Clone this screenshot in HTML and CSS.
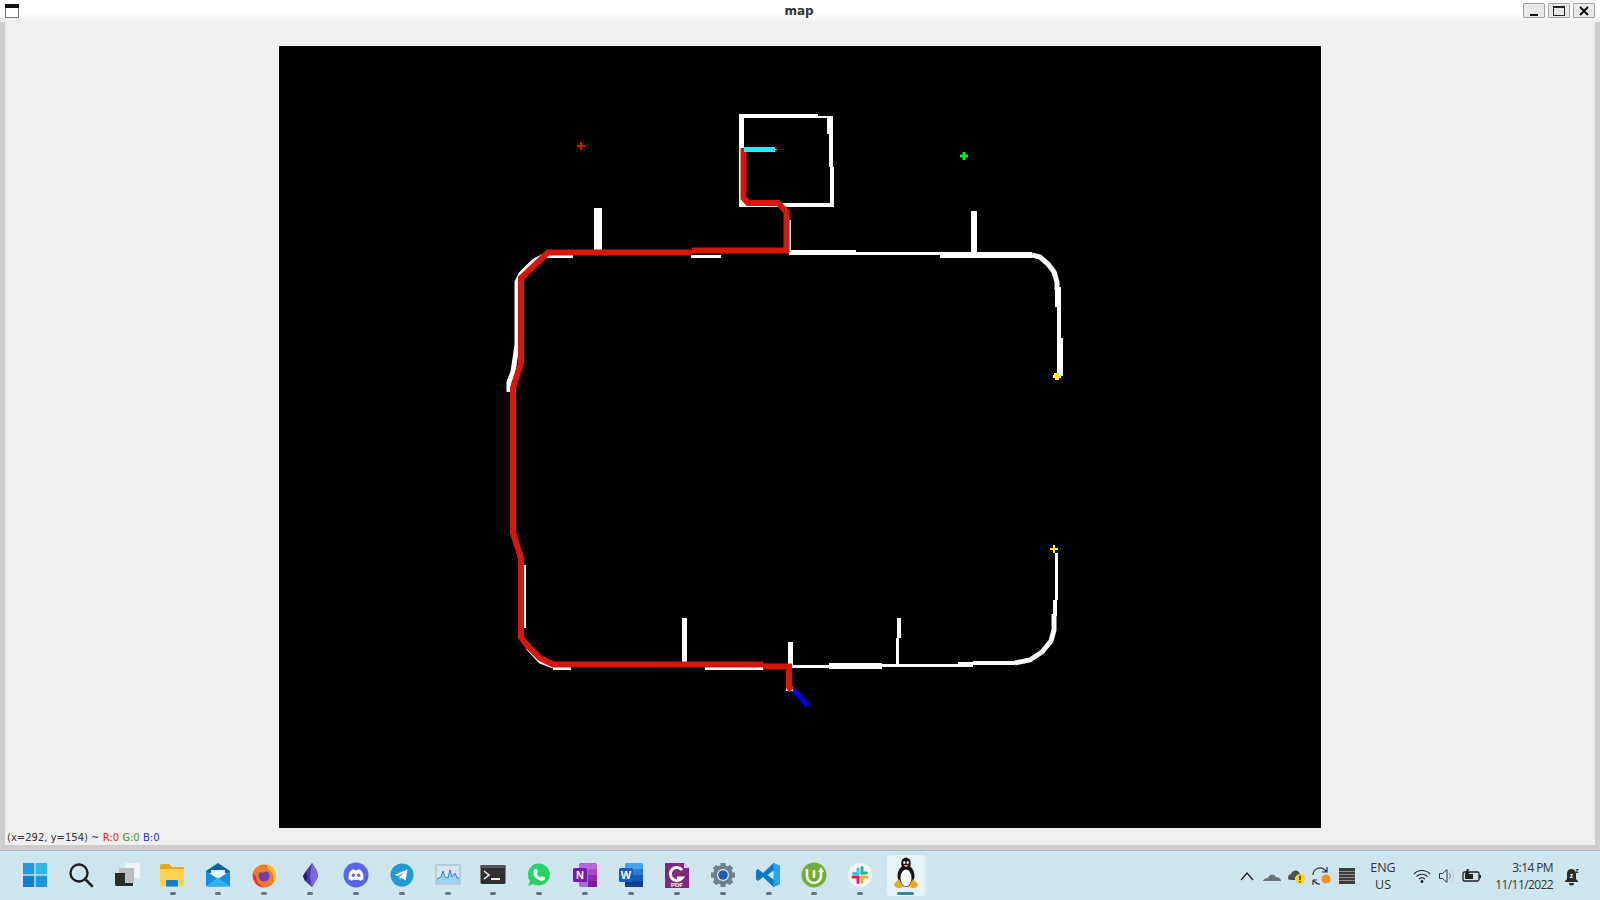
FILE: index.html
```html
<!DOCTYPE html>
<html lang="en">
  <head>
    <meta charset="UTF-8" />
    <meta name="viewport" content="width=device-width, initial-scale=1.0" />
    <title>map</title>
    <link rel="stylesheet" href="styles.css">
  </head>
  <body>
    <header class="titlebar">
      <svg class="win-icon" width="14" height="14" viewBox="0 0 14 14">
        <rect x="0.5" y="0.5" width="13" height="13" fill="#fff" stroke="#777"/>
        <rect x="0" y="0" width="14" height="4" fill="#111"/>
      </svg>
      <div class="title">map</div>
      <div class="win-buttons">
        <div class="win-btn"><svg width="12" height="12" viewBox="0 0 12 12"><rect x="2" y="9" width="8" height="2" fill="#111"/></svg></div>
        <div class="win-btn"><svg width="14" height="12" viewBox="0 0 14 12"><rect x="1.5" y="1.5" width="11" height="9" fill="none" stroke="#222"/><rect x="1" y="1" width="12" height="2" fill="#222"/></svg></div>
        <div class="win-btn"><svg width="12" height="12" viewBox="0 0 12 12"><path d="M2 2L10 10M10 2L2 10" stroke="#111" stroke-width="2"/></svg></div>
      </div>
    </header>

    <main class="window">
      <div class="canvas-wrap">
        <svg class="map" width="1042" height="782" viewBox="279 46 1042 782">
          <!-- room at the top -->
          <path class="wall" d="M739 114H818V118H739z M818 116H833V118H818z M739 118H744V207H739z M827 118H833V134H827z M829 134H833V167H829z M830 167H834V207H830z M739 203H834V207H739z"/>
          <!-- side stubs -->
          <path class="wall" d="M594 208H602V252H594z M971 211H977V254H971z M682 618H687V664H682z M788 642H793V668H788z M897 618H901V638H897z M896 638H899V665H896z M789 220H791V252H789z"/>
          <!-- top corridor -->
          <path class="wall" d="M545 255H573V258H545z M691 255H721V258H691z M789 250H856V255H789z M856 252H940V255H856z M940 252H1032V258H940z"/>
          <!-- right side -->
          <path class="wall" d="M1055 287H1061V307H1055z M1057 307H1061V338H1057z M1057 338H1063V376H1057z"/>
          <path class="wall" d="M1055 553H1058V600H1055z M1053 600H1057V616H1053z"/>
          <!-- bottom corridor -->
          <path class="wall" d="M553 667H571V670H553z M705 667H763V670H705z M792 665H829V668H792z M829 663H882V669H829z M882 664H958V667H882z M958 662H973V667H958z M973 661H1015V665H973z M524 565H526V628H524z M786 686H793V691H786z"/>
          <path class="wall-line" d="M1032 255 L1040 257 L1048 264 L1054 272 L1057 282 V290"/>
          <path class="wall-line" d="M1015 663 L1030 660 L1042 652 L1051 641 L1054 630 V614"/>
          <path class="wall-line" d="M548 254 L534 261 L521 274 L517 282 V345 L513 372 L509 382 V392"/>
          <path class="wall-thin" d="M527 648 L540 662 L553 667"/>

          <!-- planned path -->
          <path class="route" d="M743.5 148V198L748 203H778L786.500 212V250.500H692"/>
          <path class="route" d="M692 252.500H548L521 278V363L513 388V533L521 558V637L527 645L540 658L553 664.500H763"/>
          <path class="route" d="M763 666.500H789V687L792 690"/>

          <!-- heading arrows -->
          <path class="heading-cyan" d="M744 147H775V149H777V150H775V152H744z"/>
          <path class="heading-blue" d="M794 690L808 706"/>

          <!-- goal markers -->
          <path class="mark-red" d="M580 142H582V145H585V147H582V150H580V147H577V145H580z"/>
          <path class="mark-green" d="M962.500 152H965.500V154.500H968V157.500H965.500V160H962.500V157.500H960V154.500H962.500z"/>
          <path class="mark-yellow" d="M1053 545H1055V548H1058V550H1055V553H1053V550H1050V548H1053z"/>
          <path class="mark-yellow" d="M1054 373H1059V375H1061V378H1059V380H1055V378H1053V375H1054z"/>
        </svg>
      </div>
      <div class="status">(x=292, y=154) ~ <span class="st-r">R:0</span> <span class="st-g">G:0</span> <span class="st-b">B:0</span></div>
    </main>
    <div class="window-bottom"></div>

    <footer class="taskbar">
      <div class="apps">
        <div class="app plain"><svg width="26" height="26" viewBox="0 0 26 26"><path fill="#1e9be0" d="M1 1H12.300V12.300H1z"/><path fill="#35b4ee" d="M13.700 1H25V12.300H13.700z"/><path fill="#0f7fcb" d="M1 13.700H12.300V25H1z"/><path fill="#1e95dc" d="M13.700 13.700H25V25H13.700z"/></svg></div>
        <div class="app plain"><svg width="26" height="26" viewBox="0 0 26 26"><circle cx="11" cy="11" r="8.500" fill="none" stroke="#222" stroke-width="2.400"/><path d="M17 17L24 24" stroke="#222" stroke-width="2.600" stroke-linecap="round"/></svg></div>
        <div class="app plain"><svg width="26" height="26" viewBox="0 0 26 26"><rect x="11" y="1" width="15" height="15" rx="1.500" fill="#eef3f5"/><rect x="5" y="6" width="15" height="15" rx="1" fill="#b9bdbf"/><path d="M1 11H5V21H19V24H2.500A1.500 1.500 0 0 1 1 22.500z" fill="#2b2b2b"/><rect x="5" y="11" width="6" height="10" fill="#2b2b2b"/></svg></div>
        <div class="app"><svg width="26" height="26" viewBox="0 0 26 26"><path fill="#e5a71f" d="M1 3.500A1.500 1.500 0 0 1 2.500 2H10L13 5H24A1 1 0 0 1 25 6V9H1z"/><path fill="#fbd24d" d="M1 7H25V23A1.500 1.500 0 0 1 23.500 24.500H2.500A1.500 1.500 0 0 1 1 23z"/><rect x="7" y="18" width="12" height="6.500" fill="#1580d0"/></svg></div>
        <div class="app"><svg width="26" height="26" viewBox="0 0 26 26"><path fill="#0c62a8" d="M13 1L25 9V11H1V9z"/><path fill="#e6f3fb" d="M6 8H20V15H6z"/><path fill="#1690dc" d="M1 9L13 17L25 9V23A1.500 1.500 0 0 1 23.500 24.500H2.500A1.500 1.500 0 0 1 1 23z"/><path fill="#35b2ee" d="M1 24L13 16L25 24V24A1 1 0 0 1 24 24.500H2A1 1 0 0 1 1 24z"/></svg></div>
        <div class="app"><svg width="26" height="26" viewBox="0 0 26 26"><circle cx="13" cy="14" r="11.500" fill="#f57a2c"/><path fill="#fcc02e" d="M15 1.500C21 3 25 8 25 14C25 17 24 19 22.500 21C24 15 21 9 17 7C17 5 16 3 15 1.500z"/><path fill="#e8344a" d="M2 11C1 17 5 25 13 25.500C8 23 5 19 5 14z"/><circle cx="13" cy="14" r="5.500" fill="#6b3fb5"/><path fill="#f57a2c" d="M8 9C11 7 16 7 18 10C15 9 13 10 11 11z"/></svg></div>
        <div class="app"><svg width="26" height="26" viewBox="0 0 26 26"><path fill="#4a3aa8" d="M15 1L20 9L21 15L15 25L8 19L6 14L9 9z"/><path fill="#7c66dc" d="M15 1L20 9L21 15L15 25L13 15z"/><path fill="#2e2170" d="M8 19L6 14L9 9L11 16z"/></svg></div>
        <div class="app"><svg width="26" height="26" viewBox="0 0 26 26"><circle cx="13" cy="13" r="12.500" fill="#5865e8"/><path fill="#fff" d="M7.500 8.500C9 7.700 10.500 7.300 11 7.300L11.400 8.200H14.600L15 7.300C15.500 7.300 17 7.700 18.500 8.500C20 11 20.800 14 20.500 17C19.300 18 18 18.500 16.900 18.800L16 17.400C14 18 12 18 10 17.400L9.100 18.800C8 18.500 6.700 18 5.500 17C5.200 14 6 11 7.500 8.500z"/><circle cx="10.300" cy="13.300" r="1.700" fill="#5865e8"/><circle cx="15.700" cy="13.300" r="1.700" fill="#5865e8"/></svg></div>
        <div class="app"><svg width="26" height="26" viewBox="0 0 26 26"><circle cx="13" cy="13" r="11.500" fill="#2199d3"/><path fill="#fff" d="M5.500 12.800L18.500 7.500L16.500 18.500L12.700 15.800L10.800 17.600L10.400 14.700L16 10L9 14z"/></svg></div>
        <div class="app"><svg width="26" height="26" viewBox="0 0 26 26"><rect x="1" y="3" width="24" height="19" fill="#d7e6f0" stroke="#9db7c9"/><path d="M2 17L6 15L8 9L10 15L13 16L15 8L17 15L20 11L22 16L24 16V21H2z" fill="#9bd0ef"/><path d="M2 17L6 15L8 9L10 15L13 16L15 8L17 15L20 11L22 16L24 16" fill="none" stroke="#2f86c9" stroke-width="1"/></svg></div>
        <div class="app"><svg width="26" height="26" viewBox="0 0 26 26"><rect x="0.500" y="3" width="25" height="19" rx="1.500" fill="#2f2f2f"/><rect x="0.500" y="3" width="25" height="3" fill="#555"/><path d="M4 9L9 13L4 17" fill="none" stroke="#eee" stroke-width="1.600"/><rect x="11" y="16" width="9" height="2" fill="#eee"/></svg></div>
        <div class="app"><svg width="26" height="26" viewBox="0 0 26 26"><path fill="#25d366" d="M13 1.500A11 11 0 1 1 7.300 22L2 24L4 18.900A11 11 0 0 1 13 1.500z"/><path fill="#fff" d="M9 7L11 7.300L12 10L10.800 11.700C11.500 13.400 12.800 14.700 14.500 15.400L16 14L18.700 15.200L18.900 17.300C17.500 19 15 19 12.500 17.800C10 16.500 8 14.200 7.300 11.500C6.900 9.500 7.800 8 9 7z"/></svg></div>
        <div class="app"><svg width="26" height="26" viewBox="0 0 26 26"><rect x="7" y="1" width="18" height="24" rx="1.500" fill="#b469d8"/><rect x="16" y="7" width="9" height="6" fill="#a64cc9"/><rect x="16" y="13" width="9" height="6" fill="#8f2fb0"/><rect x="16" y="19" width="9" height="6" fill="#7c2199"/><rect x="1" y="6" width="14" height="14" rx="1.500" fill="#7719aa"/><text x="8" y="17" class="icon-text" font-size="11">N</text></svg></div>
        <div class="app"><svg width="26" height="26" viewBox="0 0 26 26"><rect x="7" y="1" width="18" height="24" rx="1.500" fill="#41a5ee"/><rect x="7" y="7" width="18" height="6" fill="#2b7cd3"/><rect x="7" y="13" width="18" height="6" fill="#185abd"/><rect x="7" y="19" width="18" height="6" fill="#103f91"/><rect x="1" y="6" width="14" height="14" rx="1.500" fill="#1a5dbd"/><text x="8" y="17" class="icon-text" font-size="11">W</text></svg></div>
        <div class="app"><svg width="26" height="26" viewBox="0 0 26 26"><path fill="#7c2a7f" d="M1 1H20L25 6V26H1z"/><path fill="#e6cfe8" d="M20 1L25 6H20z"/><path d="M18 8A6.500 6.500 0 1 0 18 16H13" fill="none" stroke="#fff" stroke-width="3"/><text x="13" y="24.500" class="icon-text" font-size="6">PDF</text></svg></div>
        <div class="app"><svg width="26" height="26" viewBox="0 0 26 26"><path d="M13 1V25M1 13H25M4.500 4.500L21.500 21.500M21.500 4.500L4.500 21.500" stroke="#6f7f8c" stroke-width="5"/><circle cx="13" cy="13" r="10" fill="#6f7f8c"/><circle cx="13" cy="13" r="6" fill="#e9f1f5"/><circle cx="13" cy="13" r="4.800" fill="#1f5fb0"/></svg></div>
        <div class="app"><svg width="26" height="26" viewBox="0 0 26 26"><path fill="#0b7ac4" d="M18.500 1L25 4V22L18.500 25L8 15L3 19L1 17.500V8.500L3 7L8 11z"/><path fill="#2ba4ee" d="M18.500 1L25 4V22L18.500 25V17L12 13L18.500 9z"/><path fill="#cfe5ec" d="M18.500 8.500V17.500L12.500 13z"/></svg></div>
        <div class="app"><svg width="26" height="26" viewBox="0 0 26 26"><circle cx="13" cy="13" r="12.500" fill="#76ad3a"/><path d="M6 7V14A7 7 0 0 0 20 14V9" fill="none" stroke="#f2f6ea" stroke-width="2.600"/><path d="M13 8V16" stroke="#f2f6ea" stroke-width="2.600"/><path d="M20 5L23 10H17z" fill="#f2f6ea"/></svg></div>
        <div class="app"><svg width="26" height="26" viewBox="0 0 26 26"><circle cx="13" cy="13" r="12" fill="#f4f4f4"/><g stroke-width="3" stroke-linecap="round"><path d="M11 7V11.500H6.500" stroke="#36c5f0" fill="none"/><path d="M15 5.500V11" stroke="#2eb67d"/><path d="M15 11H19.500" stroke="#2eb67d"/><path d="M15 15H20" stroke="#ecb22e"/><path d="M15 15V20" stroke="#ecb22e"/><path d="M11 15V20.500" stroke="#e01e5a"/><path d="M6 15H11" stroke="#e01e5a"/></g></svg></div>
        <div class="app active"><svg width="26" height="32" viewBox="0 0 26 32"><ellipse cx="13" cy="19" rx="8.500" ry="11" fill="#151515"/><ellipse cx="13" cy="6.500" rx="4.800" ry="6" fill="#151515"/><ellipse cx="13" cy="21" rx="5.500" ry="8.500" fill="#fbfbfb"/><ellipse cx="11.300" cy="5.500" rx="1.100" ry="1.500" fill="#fff"/><ellipse cx="14.700" cy="5.500" rx="1.100" ry="1.500" fill="#fff"/><path fill="#e9a91f" d="M10.500 8H15.500L13 10.500z"/><path fill="#e9a91f" d="M1 27L6 22L10 29L6 31.500L2 30z"/><path fill="#e9a91f" d="M25 27L20 22L16 29L20 31.500L24 30z"/></svg></div>
      </div>

      <div class="tray">
        <div class="tray-icon"><svg width="16" height="12" viewBox="0 0 16 12"><path d="M2 10L8 3L14 10" fill="none" stroke="#222" stroke-width="1.300"/></svg></div>
        <div class="tray-icon"><svg width="20" height="12" viewBox="0 0 20 12"><path fill="#6b7378" d="M1 11C2 8 5 8 6 8C7 4 12 3 14 7C17 7 19 9 19 11z"/></svg></div>
        <div class="tray-icon"><svg width="20" height="20" viewBox="0 0 20 20"><path fill="#4b5358" d="M1 12C1 9 3 8 4 8C6 3 12 4 13 8C15 8 15 10 15 11H8V14H3C2 14 1 13 1 12z"/><circle cx="13" cy="13" r="5" fill="#fcd116"/><rect x="12.300" y="9.500" width="1.400" height="4.500" fill="#222"/><rect x="12.300" y="15" width="1.400" height="1.400" fill="#222"/></svg></div>
        <div class="tray-icon"><svg width="20" height="20" viewBox="0 0 20 20"><path d="M1 9A7 7 0 0 1 13 4L15 6M15 1V6H10" fill="none" stroke="#333" stroke-width="1.200"/><path d="M5 14H1M1 14V19M1 14L3 16A6 6 0 0 0 8 18" fill="none" stroke="#333" stroke-width="1.200"/><circle cx="14" cy="13" r="4.500" fill="#f5921e"/></svg></div>
        <div class="tray-icon"><svg width="18" height="18" viewBox="0 0 18 18"><rect x="1" y="1" width="16" height="16" fill="#3d3d3d"/><path d="M1 4.500H17M1 7.500H17M1 10.500H17M1 13.500H17" stroke="#8f8f8f"/></svg></div>
        <div class="lang">ENG<br>US</div>
        <div class="tray-icon"><svg width="18" height="16" viewBox="0 0 18 16"><path d="M1 6A11 11 0 0 1 17 6M3.500 8.500A8 8 0 0 1 14.500 8.500M6 11A4.500 4.500 0 0 1 12 11" fill="none" stroke="#222" stroke-width="1.100"/><circle cx="9" cy="13.500" r="1.500" fill="#222"/></svg></div>
        <div class="tray-icon"><svg width="18" height="16" viewBox="0 0 18 16"><path d="M1.500 5.500H4.500L9 1.500V14.500L4.500 10.500H1.500z" fill="none" stroke="#333"/><path d="M11 5A4 4 0 0 1 11 11" fill="none" stroke="#777"/><path d="M13.500 3A7 7 0 0 1 13.500 13" fill="none" stroke="#bbb"/></svg></div>
        <div class="tray-icon"><svg width="20" height="14" viewBox="0 0 20 14"><rect x="1" y="3" width="16" height="9" rx="1.500" fill="none" stroke="#222" stroke-width="1.300"/><rect x="17" y="6" width="2" height="3" fill="#222"/><rect x="3" y="5" width="8" height="5" fill="#222"/><path d="M5 0L3 5H5L4 8L8 3H6L7 0z" fill="#222"/></svg></div>
        <div class="clock">3:14 PM<br>11/11/2022</div>
        <div class="tray-icon bell"><svg width="20" height="20" viewBox="0 0 20 20"><path fill="#2a2a2a" d="M8 3C5 3 4 6 4 8V13L2 15V16H15V15L13 13V8C13 6 12 3 8 3z"/><path fill="#2a2a2a" d="M6 17H11A2.500 2.500 0 0 1 6 17z"/><text x="8.500" y="12" class="bell-z" font-size="7">z</text><text x="14" y="7" class="bell-o" font-size="7">z</text></svg></div>
      </div>
    </footer>
  </body>
</html>
```

FILE: styles.css
```css
html,
body {
  margin: 0;
  height: 100%;
}

body {
  width: 1600px;
  height: 900px;
  overflow: hidden;
  display: flex;
  flex-direction: column;
  background-color: #efefef;
  font-family: "Noto Sans", sans-serif;
}

.titlebar {
  height: 22px;
  flex: none;
  display: flex;
  align-items: center;
  padding: 0 5px;
  box-sizing: border-box;
  background: linear-gradient(#fff 0, #fff 55%, #efefef 100%);
}

.win-icon {
  flex: none;
}

.title {
  flex: 1;
  text-align: center;
  font-family: "DejaVu Sans", sans-serif;
  font-size: 12px;
  font-weight: bold;
  color: #333;
  padding-left: 56px;
  margin-top: -1px;
}

.win-buttons {
  display: flex;
  gap: 3px;
  margin-top: -1px;
}

.win-btn {
  width: 22px;
  height: 15px;
  box-sizing: border-box;
  display: flex;
  align-items: center;
  justify-content: center;
  background-color: #e9e9e9;
  border: 1px solid #a2a2a2;
  border-radius: 1px;
}

.window {
  flex: 1;
  display: flex;
  flex-direction: column;
  border-left: 5px solid #cdcdcd;
  border-right: 5px solid #cdcdcd;
  min-height: 0;
}

.canvas-wrap {
  display: flex;
  justify-content: center;
  padding-top: 24px;
}

.map {
  display: block;
  background-color: #000;
}

.wall {
  fill: #fff;
  shape-rendering: crispEdges;
}

.wall-line {
  fill: none;
  stroke: #fff;
  stroke-width: 5;
}

.wall-thin {
  fill: none;
  stroke: #fff;
  stroke-width: 3;
}

.route {
  fill: none;
  stroke: #d8170a;
  stroke-width: 6;
}

.heading-cyan {
  fill: #19f0f5;
}

.heading-blue {
  fill: none;
  stroke: #0000e6;
  stroke-width: 5;
}

.mark-red {
  fill: #e01010;
}

.mark-green {
  fill: #18e030;
}

.mark-yellow {
  fill: #ffef20;
}

.status {
  font-family: "DejaVu Sans", sans-serif;
  font-size: 10px;
  line-height: 17px;
  color: #333;
  padding: 1px 0 0 2px;
  white-space: pre-wrap;
}

.st-r {
  color: #e5282c;
}

.st-g {
  color: #2f9d3c;
}

.st-b {
  color: #3333cc;
}

.window-bottom {
  height: 6px;
  flex: none;
  background-color: #cdcdcd;
  border-bottom: 1px solid #a9bcc2;
  box-sizing: border-box;
}

.taskbar {
  height: 49px;
  flex: none;
  display: flex;
  justify-content: space-between;
  background-color: #cfe5ed;
  color: #222;
}

.apps {
  display: flex;
  padding-left: 12px;
}

.app {
  width: 45.85px;
  height: 49px;
  box-sizing: border-box;
  padding-bottom: 2px;
  position: relative;
  display: flex;
  align-items: center;
  justify-content: center;
}

.app::after {
  content: "";
  position: absolute;
  left: 20px;
  bottom: 5px;
  width: 6px;
  height: 3px;
  border-radius: 2px;
  background-color: #66757c;
}

.app.plain::after {
  display: none;
}

.app.active {
  background-color: #e5f2f6;
  width: 37px;
  height: 41px;
  margin: 4px 4px 0 4px;
  border-radius: 4px;
  box-shadow: 3px 0 0 #dbecf1;
}

.app.active svg {
  margin-bottom: 4px;
}

.app.active::after {
  left: 10px;
  bottom: 1px;
  width: 17px;
  height: 3px;
  background-color: #36899c;
}

.icon-text {
  font-family: "Liberation Sans", sans-serif;
  font-weight: bold;
  fill: #fff;
  text-anchor: middle;
}

.bell-z {
  font-family: "Liberation Sans", sans-serif;
  font-weight: bold;
  fill: #fff;
  text-anchor: middle;
}

.bell-o {
  font-family: "Liberation Sans", sans-serif;
  font-weight: bold;
  fill: #2a2a2a;
  text-anchor: middle;
}

.tray {
  display: flex;
  align-items: center;
  padding-right: 15px;
  font-family: "Open Sans", sans-serif;
  font-size: 12.5px;
  line-height: 17px;
  color: #333;
}

.tray-icon {
  width: 25px;
  height: 24px;
  display: flex;
  align-items: center;
  justify-content: center;
}

.lang {
  width: 36px;
  margin: 0 8px 0 6px;
  text-align: center;
}

.clock {
  width: 62px;
  margin-left: 7px;
  font-size: 12px;
  letter-spacing: -0.6px;
  text-align: right;
  white-space: nowrap;
}

.bell {
  margin-left: 7px;
}
```
